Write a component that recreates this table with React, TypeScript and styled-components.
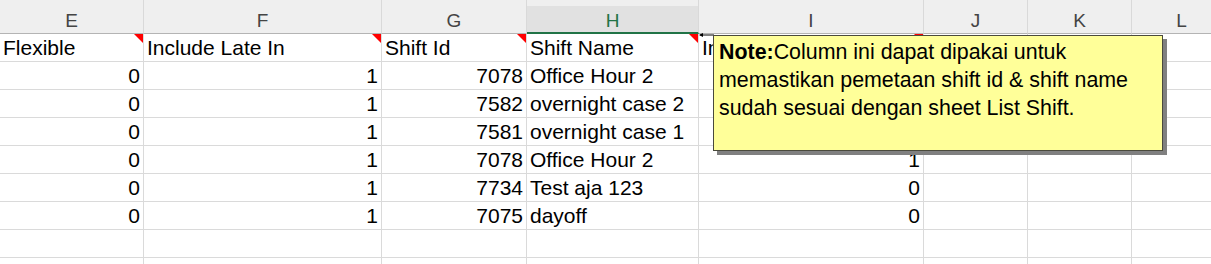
import React from "react";
import styled, { createGlobalStyle, css } from "styled-components";

const GlobalStyle = createGlobalStyle`
  html, body {
    margin: 0;
    padding: 0;
    background: #ffffff;
    overflow: hidden;
  }
  * { box-sizing: border-box; }
`;

const columns = [
  { key: "E", width: 144 },
  { key: "F", width: 238 },
  { key: "G", width: 145 },
  { key: "H", width: 172 },
  { key: "I", width: 225 },
  { key: "J", width: 104 },
  { key: "K", width: 104 },
  { key: "L", width: 100 },
];

const template = columns.map((c) => `${c.width}px`).join(" ");

const Sheet = styled.div`
  position: relative;
  width: 1211px;
  height: 264px;
  overflow: hidden;
  font-family: "Liberation Sans", Arial, sans-serif;
`;

const Grid = styled.div`
  display: grid;
  grid-template-columns: ${template};
  grid-template-rows: 34px;
  grid-auto-rows: 28px;
`;

const HeaderCell = styled.div<{ $selected?: boolean }>`
  display: flex;
  align-items: center;
  justify-content: center;
  padding-top: 9px;
  font-size: 19px;
  color: #444444;
  background: #efefef;
  border-right: 1px solid #d9d9d9;
  border-bottom: 1px solid #b4b4b4;
  ${(p) =>
    p.$selected &&
    css`
      color: #217346;
      background: linear-gradient(to bottom, #efefef 6px, #e1e1e1 6px);
      border-bottom: 2px solid #217346;
      padding-top: 10px;
    `}
`;

const Cell = styled.div<{ $num?: boolean; $note?: boolean }>`
  position: relative;
  padding: 0 ${(p) => (p.$num ? "3px" : "2px")} 0 ${(p) => (p.$num ? "2px" : "3px")};
  font-size: 21px;
  line-height: 27px;
  color: #000000;
  white-space: nowrap;
  overflow: hidden;
  text-align: ${(p) => (p.$num ? "right" : "left")};
  border-right: 1px solid #dadada;
  border-bottom: 1px solid #dadada;
  ${(p) =>
    p.$note &&
    css`
      &::after {
        content: "";
        position: absolute;
        top: 0;
        right: 0;
        border-top: 9px solid #ff0000;
        border-left: 9px solid transparent;
      }
    `}
`;

const NoteBox = styled.div`
  position: absolute;
  left: 713px;
  top: 35px;
  width: 450px;
  height: 116px;
  padding: 2px 6px 0 5px;
  background: #ffff99;
  border: 1px solid #4a4a3c;
  box-shadow: 4px 4px 0 0 #808080;
  font-family: "Liberation Sans", Arial, sans-serif;
  font-size: 21.4px;
  line-height: 28px;
  color: #000000;
  white-space: nowrap;
`;

const Connector = styled.svg`
  position: absolute;
  left: 698px;
  top: 31px;
`;

const headerRow = ["Flexible", "Include Late In", "Shift Id", "Shift Name", "In", "", "", ""];

const rows: [number, number, number, string, number | ""][] = [
  [0, 1, 7078, "Office Hour 2", ""],
  [0, 1, 7582, "overnight case 2", ""],
  [0, 1, 7581, "overnight case 1", ""],
  [0, 1, 7078, "Office Hour 2", 1],
  [0, 1, 7734, "Test aja 123", 0],
  [0, 1, 7075, "dayoff", 0],
];

export default function App() {
  return (
    <>
      <GlobalStyle />
      <Sheet>
        <Grid>
          {columns.map((c) => (
            <HeaderCell key={c.key} $selected={c.key === "H"}>
              {c.key}
            </HeaderCell>
          ))}
          {headerRow.map((t, i) => (
            <Cell key={`h${i}`} $note={i < 5}>
              {t}
            </Cell>
          ))}
          {rows.map((r, ri) => (
            <React.Fragment key={ri}>
              <Cell $num>{r[0]}</Cell>
              <Cell $num>{r[1]}</Cell>
              <Cell $num>{r[2]}</Cell>
              <Cell>{r[3]}</Cell>
              <Cell $num>{r[4]}</Cell>
              <Cell />
              <Cell />
              <Cell />
            </React.Fragment>
          ))}
          {[0, 1].map((ri) =>
            columns.map((c) => <Cell key={`e${ri}${c.key}`} />)
          )}
        </Grid>
        <Connector width="16" height="8" viewBox="0 0 16 8">
          <line x1="2" y1="4" x2="16" y2="4" stroke="#000" strokeWidth="1" />
          <path d="M1 4 L5 2 L5 6 Z" fill="#000" />
        </Connector>
        <NoteBox>
          <b>Note:</b>Column ini dapat dipakai untuk
          <br />
          memastikan pemetaan shift id &amp; shift name
          <br />
          sudah sesuai dengan sheet List Shift.
        </NoteBox>
      </Sheet>
    </>
  );
}
